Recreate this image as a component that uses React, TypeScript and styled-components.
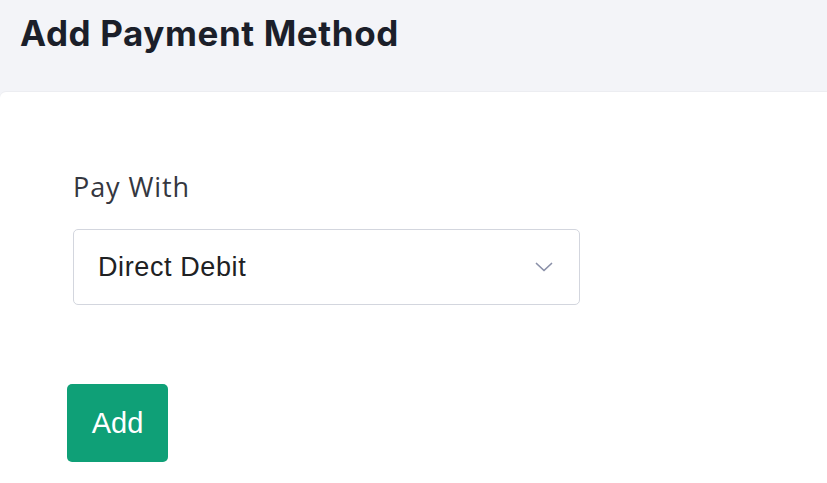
import React from "react";
import styled, { createGlobalStyle } from "styled-components";

const Global = createGlobalStyle`
  html, body { margin: 0; padding: 0; background: #f3f4f8; }
  body { font-family: "Liberation Sans", Arial, sans-serif; }
  * { box-sizing: border-box; }
`;

const Page = styled.div`
  width: 827px;
  height: 483px;
  display: flex;
  flex-direction: column;
  background: #f3f4f8;
  overflow: hidden;
`;

const Header = styled.header`
  height: 92px;
  padding: 13px 0 0 20px;
  flex-shrink: 0;
`;

const Title = styled.h1`
  margin: 0;
  font-family: Inter, "Liberation Sans", sans-serif;
  font-weight: 700;
  font-size: 35px;
  letter-spacing: 0.6px;
  line-height: 40px;
  color: #1b1f2a;
`;

const Card = styled.main`
  flex: 1;
  background: #ffffff;
  border-top-left-radius: 6px;
  box-shadow: 0 -1px 1px rgba(0, 0, 0, 0.03);
  padding: 78px 0 0 67px;
  display: flex;
  flex-direction: column;
  align-items: flex-start;
`;

const Field = styled.div`
  display: flex;
  flex-direction: column;
  margin-left: 6px;
`;

const Label = styled.label`
  font-family: "Open Sans", "Liberation Sans", sans-serif;
  font-size: 27px;
  letter-spacing: 0.9px;
  line-height: 34px;
  color: #353740;
  margin-bottom: 25px;
`;

const SelectBox = styled.div`
  width: 507px;
  height: 76px;
  border: 1.5px solid #d3d6de;
  border-radius: 5px;
  display: flex;
  align-items: center;
  justify-content: space-between;
  padding: 0 26px 0 24px;
  background: #fff;
`;

const SelectText = styled.span`
  font-family: "Liberation Sans", Arial, sans-serif;
  font-size: 27px;
  letter-spacing: 0.6px;
  color: #202123;
`;

const Button = styled.button`
  margin-top: 79px;
  width: 101px;
  height: 78px;
  border: none;
  border-radius: 5px;
  background: #0fa077;
  color: #ffffff;
  font-family: "Liberation Sans", Arial, sans-serif;
  font-size: 29px;
  cursor: pointer;
`;

export default function App() {
  return (
    <>
      <Global />
      <Page>
        <Header>
          <Title>Add Payment Method</Title>
        </Header>
        <Card>
          <Field>
            <Label>Pay With</Label>
            <SelectBox>
              <SelectText>Direct Debit</SelectText>
              <svg width="18" height="10" viewBox="0 0 18 10" fill="none">
                <path d="M1.5 1.5 L9 8.5 L16.5 1.5" stroke="#8a90a8" strokeWidth="1.7" strokeLinecap="round" strokeLinejoin="round" />
              </svg>
            </SelectBox>
          </Field>
          <Button>Add</Button>
        </Card>
      </Page>
    </>
  );
}
